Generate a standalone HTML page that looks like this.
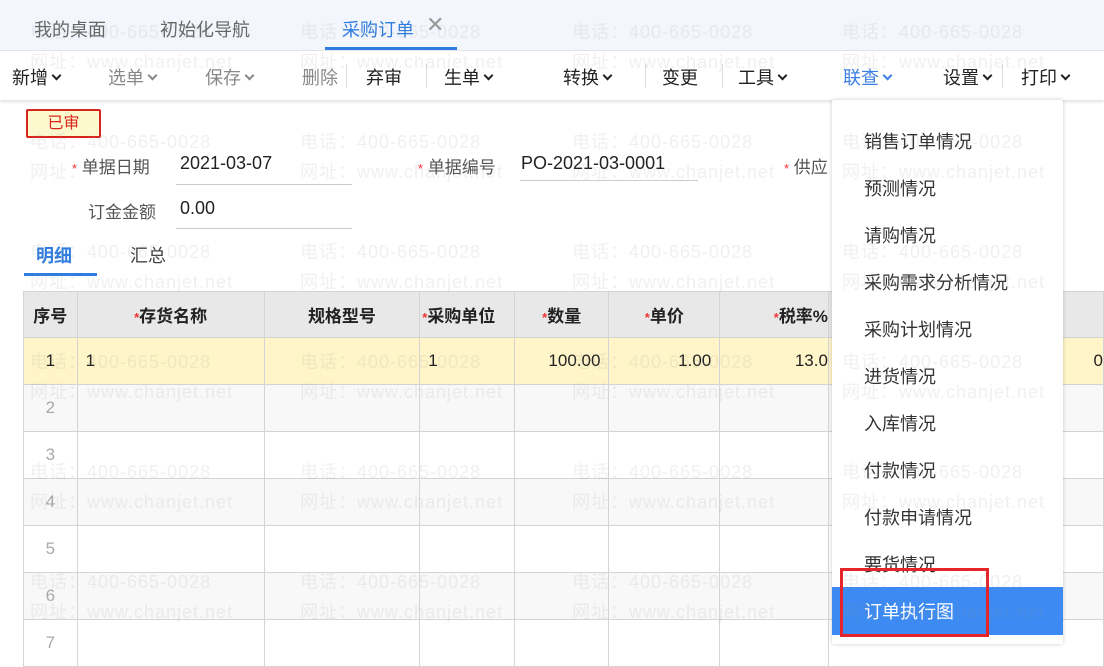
<!DOCTYPE html>
<html><head><meta charset="utf-8"><style>
*{margin:0;padding:0;box-sizing:border-box}
body{width:1104px;height:644px;overflow:hidden;position:relative;background:#fff;font-family:"Liberation Sans","Noto Sans CJK SC",sans-serif;color:#222}
.a{position:absolute;white-space:nowrap}
.tabbar{position:absolute;left:0;top:0;width:1104px;height:51px;background:#f3f6fc;border-bottom:1px solid #e3e6ee}
.tb{position:absolute;top:51px;left:0;width:1104px;height:49px;background:#fff;box-shadow:0 2px 3px rgba(0,0,0,.12)}
.t{font-size:18px;top:64px}
.g{color:#888}
.sep{position:absolute;top:64px;width:1px;height:24px;background:#ddd}
.chev{display:inline-block;width:7px;height:7px;border-right:2px solid currentColor;border-bottom:2px solid currentColor;transform:rotate(45deg);margin-left:5px;position:relative;top:-5px}
.lbl{font-size:17px;color:#555}
.star{color:#e33;font-size:13px}
.ul{position:absolute;height:1px;background:#ccc}
table{position:absolute;left:23px;top:291px;border-collapse:collapse;font-size:17px}
td{border:1.5px solid #d4d4d4;height:47px;padding:0 8px}
tr.h td{background:#e8e8e8;font-weight:bold;height:46px}
tr.y td{background:#fff5c9}
tr.e td{background:#f8f8f8}
.w{position:absolute;color:rgba(140,140,140,0.13);font-size:18px;white-space:nowrap;letter-spacing:1px;pointer-events:none}
.menu{position:absolute;left:832px;top:100px;width:231px;height:544px;background:#fff;box-shadow:0 0 4px rgba(0,0,0,.2);border-radius:2px}
.mi{position:absolute;left:32px;font-size:18px;color:#333}
</style></head><body>
<div class="tabbar"></div>
<div class="a" style="left:34px;top:16px;font-size:18px;color:#666">我的桌面</div>
<div class="a" style="left:160px;top:16px;font-size:18px;color:#666">初始化导航</div>
<div class="a" style="left:342px;top:16px;font-size:18px;color:#2f7de1">采购订单</div>
<div class="a" style="left:426px;top:12px;font-size:22px;color:#999">✕</div>
<div class="a" style="left:325px;top:47px;width:132px;height:3px;background:#2f7de1"></div>
<div class="tb"></div>
<div class="a t" style="left:12px">新增<span class="chev"></span></div>
<div class="a t g" style="left:108px">选单<span class="chev"></span></div>
<div class="a t g" style="left:205px">保存<span class="chev"></span></div>
<div class="a t g" style="left:302px">删除</div>
<div class="sep" style="left:346px"></div>
<div class="a t" style="left:366px">弃审</div>
<div class="sep" style="left:426px"></div>
<div class="a t" style="left:444px">生单<span class="chev"></span></div>
<div class="a t" style="left:563px">转换<span class="chev"></span></div>
<div class="sep" style="left:645px"></div>
<div class="a t" style="left:662px">变更</div>
<div class="sep" style="left:722px"></div>
<div class="a t" style="left:738px">工具<span class="chev"></span></div>
<div class="a t" style="left:843px;color:#3a7fe6">联查<span class="chev"></span></div>
<div class="a t" style="left:943px">设置<span class="chev"></span></div>
<div class="sep" style="left:1002px"></div>
<div class="a t" style="left:1021px">打印<span class="chev"></span></div>
<div class="a" style="left:26px;top:109px;width:75px;height:29px;background:#fdf9cf;border:2px solid #d8261c;border-radius:2px;color:#d8261c;font-size:16px;text-align:center;line-height:25px">已审</div>
<div class="a lbl" style="left:72px;top:153px"><span class="star">*</span> 单据日期</div>
<div class="a" style="left:180px;top:153px;font-size:18px">2021-03-07</div>
<div class="ul" style="left:176px;top:184px;width:176px"></div>
<div class="a lbl" style="left:418px;top:153px"><span class="star">*</span> 单据编号</div>
<div class="a" style="left:521px;top:153px;font-size:18px">PO-2021-03-0001</div>
<div class="ul" style="left:520px;top:180px;width:178px"></div>
<div class="a lbl" style="left:784px;top:153px"><span class="star">*</span> 供应</div>
<div class="a lbl" style="left:88px;top:198px">订金金额</div>
<div class="a" style="left:180px;top:198px;font-size:18px">0.00</div>
<div class="ul" style="left:176px;top:228px;width:176px"></div>
<div class="a" style="left:36px;top:242px;font-size:18px;color:#2f7de1;font-weight:bold">明细</div>
<div class="a" style="left:130px;top:242px;font-size:18px;color:#444">汇总</div>
<div class="a" style="left:24px;top:273px;width:73px;height:3px;background:#2f7de1"></div>
<table>
<colgroup><col style="width:54px"><col style="width:190px"><col style="width:158px"><col style="width:96px"><col style="width:95px"><col style="width:112px"><col style="width:110px"><col style="width:280px"></colgroup>
<tr class="h"><td style="text-align:center">序号</td><td style="text-align:center"><span class="star">*</span>存货名称</td><td style="text-align:center">规格型号</td><td style="padding:0 2px"><span class="star">*</span>采购单位</td><td style="text-align:center"><span class="star">*</span>数量</td><td style="text-align:center"><span class="star">*</span>单价</td><td style="text-align:right;padding-right:0"><span class="star">*</span>税率%</td><td></td></tr>
<tr class="y"><td style="text-align:center">1</td><td>1</td><td></td><td>1</td><td style="text-align:right">100.00</td><td style="text-align:right">1.00</td><td style="text-align:right;padding-right:0">13.0</td><td style="text-align:right;padding-right:0">0</td></tr>
<tr class="e"><td style="text-align:center;color:#aaa">2</td><td></td><td></td><td></td><td></td><td></td><td></td><td></td></tr>
<tr><td style="text-align:center;color:#aaa">3</td><td></td><td></td><td></td><td></td><td></td><td></td><td></td></tr>
<tr class="e"><td style="text-align:center;color:#aaa">4</td><td></td><td></td><td></td><td></td><td></td><td></td><td></td></tr>
<tr><td style="text-align:center;color:#aaa">5</td><td></td><td></td><td></td><td></td><td></td><td></td><td></td></tr>
<tr class="e"><td style="text-align:center;color:#aaa">6</td><td></td><td></td><td></td><td></td><td></td><td></td><td></td></tr>
<tr><td style="text-align:center;color:#aaa">7</td><td></td><td></td><td></td><td></td><td></td><td></td><td></td></tr>
</table>
<div class="menu">
<div class="mi" style="top:28px">销售订单情况</div>
<div class="mi" style="top:75px">预测情况</div>
<div class="mi" style="top:122px">请购情况</div>
<div class="mi" style="top:169px">采购需求分析情况</div>
<div class="mi" style="top:216px">采购计划情况</div>
<div class="mi" style="top:263px">进货情况</div>
<div class="mi" style="top:310px">入库情况</div>
<div class="mi" style="top:357px">付款情况</div>
<div class="mi" style="top:404px">付款申请情况</div>
<div class="mi" style="top:451px">要货情况</div>
<div class="a" style="left:0;top:487px;width:231px;height:48px;background:#3d8bf2"></div>
<div class="mi" style="top:498px;color:#fff">订单执行图</div>
</div>
<div class="a" style="left:840px;top:568px;width:149px;height:69px;border:3px solid #e5252a"></div>
<div class="w" style="left:30px;top:18px">电话：400-665-0028</div>
<div class="w" style="left:300px;top:18px">电话：400-665-0028</div>
<div class="w" style="left:572px;top:18px">电话：400-665-0028</div>
<div class="w" style="left:842px;top:18px">电话：400-665-0028</div>
<div class="w" style="left:30px;top:48px">网址：www.chanjet.net</div>
<div class="w" style="left:300px;top:48px">网址：www.chanjet.net</div>
<div class="w" style="left:572px;top:48px">网址：www.chanjet.net</div>
<div class="w" style="left:842px;top:48px">网址：www.chanjet.net</div>
<div class="w" style="left:30px;top:128px">电话：400-665-0028</div>
<div class="w" style="left:300px;top:128px">电话：400-665-0028</div>
<div class="w" style="left:572px;top:128px">电话：400-665-0028</div>
<div class="w" style="left:842px;top:128px">电话：400-665-0028</div>
<div class="w" style="left:30px;top:158px">网址：</div>
<div class="w" style="left:300px;top:158px">网址：www.chanjet.net</div>
<div class="w" style="left:572px;top:158px">网址：www.chanjet.net</div>
<div class="w" style="left:842px;top:158px">网址：www.chanjet.net</div>
<div class="w" style="left:30px;top:238px">电话：400-665-0028</div>
<div class="w" style="left:300px;top:238px">电话：400-665-0028</div>
<div class="w" style="left:572px;top:238px">电话：400-665-0028</div>
<div class="w" style="left:842px;top:238px">电话：400-665-0028</div>
<div class="w" style="left:30px;top:268px">网址：www.chanjet.net</div>
<div class="w" style="left:300px;top:268px">网址：www.chanjet.net</div>
<div class="w" style="left:572px;top:268px">网址：www.chanjet.net</div>
<div class="w" style="left:842px;top:268px">网址：www.chanjet.net</div>
<div class="w" style="left:30px;top:348px">电话：400-665-0028</div>
<div class="w" style="left:300px;top:348px">电话：400-665-0028</div>
<div class="w" style="left:572px;top:348px">电话：400-665-0028</div>
<div class="w" style="left:842px;top:348px">电话：400-665-0028</div>
<div class="w" style="left:30px;top:378px">网址：www.chanjet.net</div>
<div class="w" style="left:300px;top:378px">网址：www.chanjet.net</div>
<div class="w" style="left:572px;top:378px">网址：www.chanjet.net</div>
<div class="w" style="left:842px;top:378px">网址：www.chanjet.net</div>
<div class="w" style="left:30px;top:458px">电话：400-665-0028</div>
<div class="w" style="left:300px;top:458px">电话：400-665-0028</div>
<div class="w" style="left:572px;top:458px">电话：400-665-0028</div>
<div class="w" style="left:842px;top:458px">电话：400-665-0028</div>
<div class="w" style="left:30px;top:488px">网址：www.chanjet.net</div>
<div class="w" style="left:300px;top:488px">网址：www.chanjet.net</div>
<div class="w" style="left:572px;top:488px">网址：www.chanjet.net</div>
<div class="w" style="left:842px;top:488px">网址：www.chanjet.net</div>
<div class="w" style="left:30px;top:568px">电话：400-665-0028</div>
<div class="w" style="left:300px;top:568px">电话：400-665-0028</div>
<div class="w" style="left:572px;top:568px">电话：400-665-0028</div>
<div class="w" style="left:842px;top:568px">电话：400-665-0028</div>
<div class="w" style="left:30px;top:598px">网址：www.chanjet.net</div>
<div class="w" style="left:300px;top:598px">网址：www.chanjet.net</div>
<div class="w" style="left:572px;top:598px">网址：www.chanjet.net</div>
<div class="w" style="left:842px;top:598px">网址：www.chanjet.net</div>
</body></html>
